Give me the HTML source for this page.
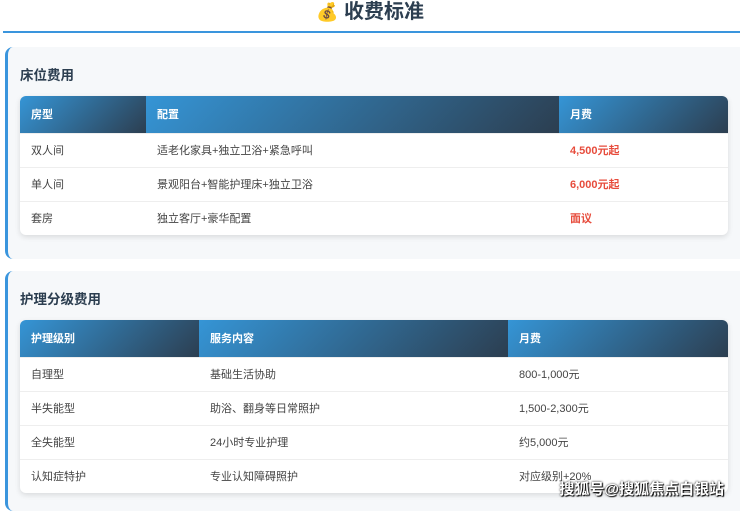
<!DOCTYPE html>
<html><head><meta charset="utf-8"><style>
*{margin:0;padding:0;box-sizing:border-box}
body{width:740px;height:507px;overflow:hidden;background:#fff;font-family:"Liberation Sans","Noto Sans CJK SC",sans-serif;color:#333;position:relative}
h1{position:absolute;top:-1px;left:0;width:740px;text-align:center;font-size:20px;font-weight:bold;color:#2c3e50;line-height:26px}
.line{position:absolute;top:31px;left:3px;width:737px;height:2px;background:#3a95dd}
.card{position:absolute;left:5px;width:740px;background:#f6f8fa;border-left:3px solid #3a95dd;border-radius:8px 0 0 8px}
.card h2{position:absolute;left:12px;font-size:13.5px;font-weight:bold;color:#2c3e50}
table{position:absolute;left:12px;width:708px;border-collapse:collapse;background:#fff;border-radius:6px;overflow:hidden;box-shadow:0 2px 6px rgba(0,0,0,.12);font-size:11px}
th{height:37px;text-align:left;padding-left:11px;color:#fff;font-weight:bold;background:linear-gradient(135deg,#3595d6,#2c3e50)}
td{height:34px;padding-left:11px;color:#444;border-top:1px solid #eee}
.r{color:#e74c3c;font-weight:bold}
.wm{position:absolute;right:16px;bottom:8px;color:#fff;font-size:15px;font-weight:bold;text-shadow:0 0 2px #000,1px 1px 1px #000}
</style></head><body>
<h1><span style="font-size:18px">💰</span> 收费标准</h1>
<div class="line"></div>
<div class="card" style="top:47px;height:212px">
<h2 style="top:17px">床位费用</h2>
<table style="top:49px">
<tr><th style="width:126px">房型</th><th style="width:413px">配置</th><th>月费</th></tr>
<tr><td>双人间</td><td>适老化家具+独立卫浴+紧急呼叫</td><td class="r">4,500元起</td></tr>
<tr><td>单人间</td><td>景观阳台+智能护理床+独立卫浴</td><td class="r">6,000元起</td></tr>
<tr><td>套房</td><td>独立客厅+豪华配置</td><td class="r">面议</td></tr>
</table></div>
<div class="card" style="top:271px;height:240px">
<h2 style="top:17px">护理分级费用</h2>
<table style="top:49px">
<tr><th style="width:179px">护理级别</th><th style="width:309px">服务内容</th><th>月费</th></tr>
<tr><td>自理型</td><td>基础生活协助</td><td>800-1,000元</td></tr>
<tr><td>半失能型</td><td>助浴、翻身等日常照护</td><td>1,500-2,300元</td></tr>
<tr><td>全失能型</td><td>24小时专业护理</td><td>约5,000元</td></tr>
<tr><td>认知症特护</td><td>专业认知障碍照护</td><td>对应级别+20%</td></tr>
</table></div>
<div class="wm">搜狐号@搜狐焦点白银站</div>
</body></html>
